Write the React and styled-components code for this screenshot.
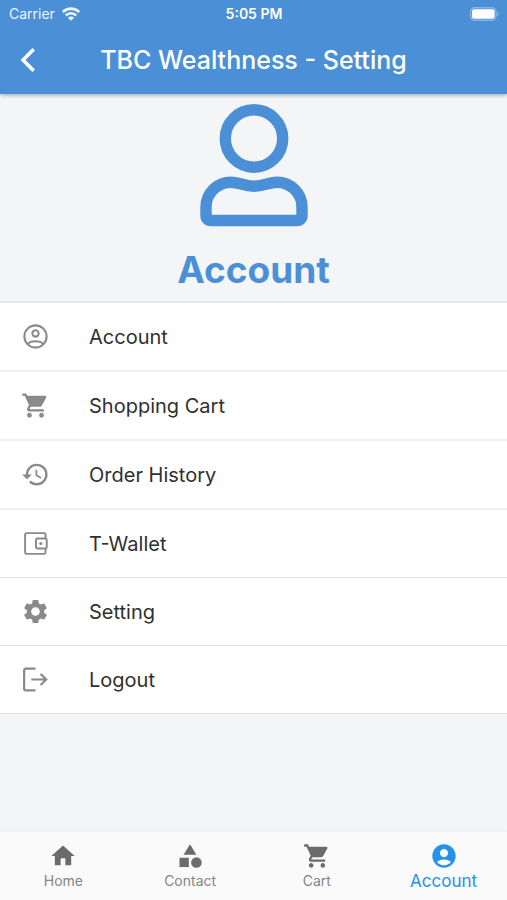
import React, { useState } from "react";
import styled, { createGlobalStyle } from "styled-components";
import {
  MdAccountCircle,
  MdCategory,
  MdHistory,
  MdHome,
  MdSettings,
  MdShoppingCart,
} from "react-icons/md";

const GlobalStyle = createGlobalStyle`
  * {
    box-sizing: border-box;
  }
  body {
    margin: 0;
    background-color: #f3f5f7;
    font-family: Inter, "Liberation Sans", sans-serif;
  }
`;

const Screen = styled.div`
  display: flex;
  flex-direction: column;
  min-height: 100vh;
`;

const Header = styled.header`
  position: relative;
  background-color: #4b90d7;
  color: white;
  box-shadow: 0 1px 4px rgba(0, 0, 0, 0.35);
`;

const StatusBar = styled.div`
  display: grid;
  grid-template-columns: 1fr auto 1fr;
  align-items: center;
  height: 27px;
  padding: 0 8px 0 9px;
  font-size: 14px;
`;

const Carrier = styled.span`
  display: flex;
  align-items: center;
  gap: 7px;
  opacity: 0.92;
`;

const Clock = styled.span`
  font-weight: 600;
`;

const Battery = styled.span`
  display: flex;
  justify-content: flex-end;
`;

const TitleBar = styled.div`
  display: grid;
  grid-template-columns: 56px 1fr 56px;
  align-items: center;
  height: 67px;
  padding-bottom: 2px;
`;

const BackButton = styled.button`
  display: flex;
  align-items: center;
  justify-content: center;
  height: 48px;
  padding: 0;
  border: none;
  background: none;
  color: white;
  cursor: pointer;
`;

const Title = styled.h1`
  margin: 0;
  font-size: 25px;
  font-weight: 500;
  text-align: center;
  white-space: nowrap;
`;

const Profile = styled.section`
  display: flex;
  flex-direction: column;
  align-items: center;
  gap: 19px;
  padding: 8px 0;
  border-bottom: 2px solid #e4e6e8;
  color: #4b90d7;
`;

const ProfileName = styled.h2`
  margin: 0;
  font-size: 37px;
  line-height: 46px;
  font-weight: 700;
`;

const Menu = styled.ul`
  margin: 0;
  padding: 0;
  list-style: none;
  background-color: white;
`;

const MenuItem = styled.li`
  border-bottom: ${(props) => (props.$thin ? "1px solid #dfe1e3" : "2px solid #eceeef")};
`;

const MenuButton = styled.button`
  display: flex;
  align-items: center;
  gap: 39px;
  width: 100%;
  height: 67px;
  padding: 0 21px;
  border: none;
  background: none;
  color: #303030;
  font-family: inherit;
  font-size: 20px;
  text-align: left;
  cursor: pointer;

  svg {
    flex: none;
    color: #8a8a8a;
  }
`;

const TabBar = styled.nav`
  display: flex;
  height: 68px;
  margin-top: auto;
  background-color: #fafafa;
  box-shadow: 0 -1px 4px rgba(0, 0, 0, 0.04);
`;

const Tab = styled.a`
  display: flex;
  flex: 1;
  flex-direction: column;
  align-items: center;
  padding-top: 10px;
  color: ${(props) => (props.$active ? "#2492ea" : "#858585")};
  font-size: ${(props) => (props.$active ? "17px" : "14px")};
  line-height: 22px;
  text-decoration: none;

  svg {
    color: ${(props) => (props.$active ? "#2492ea" : "#6b6b6b")};
  }
`;

function WifiIcon() {
  return (
    <svg width="18" height="14" viewBox="0 0 18 14" fill="none" stroke="currentColor" strokeWidth="2.7">
      <path d="M.8 5C5.4 .6 12.6 .6 17.2 5" />
      <path d="M3.8 8.4c3-2.9 7.4-2.9 10.4 0" />
      <path d="M9 13.8 5.9 10.7c1.8-1.7 4.4-1.7 6.2 0z" fill="currentColor" stroke="none" />
    </svg>
  );
}

function BatteryIcon() {
  return (
    <svg width="30" height="14" viewBox="0 0 30 14">
      <rect x="1.6" y="0.75" width="25.4" height="12.5" rx="4" fill="none" stroke="white" strokeOpacity="0.35" strokeWidth="1.3" />
      <rect x="3" y="2.3" width="22.6" height="9.4" rx="2" fill="white" />
      <path d="M28.2 5c1.6.6 1.6 3.4 0 4z" fill="white" fillOpacity="0.45" />
    </svg>
  );
}

function BackIcon() {
  return (
    <svg width="16" height="26" viewBox="0 0 16 26" fill="none" stroke="currentColor" strokeWidth="3.6">
      <path d="M13.7 2.2 3 13l10.7 10.8" />
    </svg>
  );
}

function PersonIcon() {
  return (
    <svg width="108" height="126" viewBox="0 0 108 126" fill="none" stroke="currentColor" strokeWidth="11.4">
      <circle cx="54" cy="36.5" r="28.7" />
      <path
        d="M6 108.5V105C6 91.5 17 80.2 31 80.2C39 80.2 44 84.3 54 84.3C64 84.3 69 80.2 77 80.2C91 80.2 102 91.5 102 105V113.5C102 116.5 100 118.5 97 118.5H11C8 118.5 6 116.5 6 113.5Z"
        strokeLinejoin="round"
      />
    </svg>
  );
}

function AccountOutlineIcon({ size }) {
  return (
    <svg width={size} height={size} viewBox="0 0 24 24" fill="none" stroke="currentColor" strokeWidth="1.7">
      <circle cx="12" cy="12" r="9.2" />
      <circle cx="12" cy="9.5" r="2.6" />
      <path d="M5.6 18.2C8.3 15.2 15.7 15.2 18.4 18.2" />
    </svg>
  );
}

function WalletIcon({ size }) {
  return (
    <svg width={size} height={size} viewBox="0 0 24 24" fill="none" stroke="currentColor" strokeWidth="1.6">
      <path d="M20.3 7.9V4.6Q20.3 3.4 19.1 3.4H4.6Q3.4 3.4 3.4 4.6V19.4Q3.4 20.6 4.6 20.6H19.1Q20.3 20.6 20.3 19.4V16.1" />
      <rect x="12.4" y="7.9" width="8.9" height="8.2" rx="1.2" />
      <circle cx="16.4" cy="12" r="1.3" fill="currentColor" stroke="none" />
    </svg>
  );
}

function LogoutIcon({ size }) {
  return (
    <svg width={size} height={size} viewBox="0 0 24 24" fill="none" stroke="currentColor" strokeWidth="1.8">
      <path d="M12 3H4Q2.6 3 2.6 4.4v15.2Q2.6 21 4 21H12" />
      <path d="M8.5 12H21M16.2 7.4l4.7 4.6-4.7 4.6" />
    </svg>
  );
}

const menuItems = [
  { label: "Account", Icon: AccountOutlineIcon },
  { label: "Shopping Cart", Icon: MdShoppingCart },
  { label: "Order History", Icon: MdHistory },
  { label: "T-Wallet", Icon: WalletIcon, thin: true },
  { label: "Setting", Icon: MdSettings, thin: true },
  { label: "Logout", Icon: LogoutIcon, thin: true },
];

const tabs = [
  { label: "Home", Icon: MdHome },
  { label: "Contact", Icon: MdCategory },
  { label: "Cart", Icon: MdShoppingCart },
  { label: "Account", Icon: MdAccountCircle },
];

export default function App() {
  const [activeTab, setActiveTab] = useState("Account");

  return (
    <Screen>
      <GlobalStyle />
      <Header>
        <StatusBar>
          <Carrier>
            Carrier
            <WifiIcon />
          </Carrier>
          <Clock>5:05 PM</Clock>
          <Battery>
            <BatteryIcon />
          </Battery>
        </StatusBar>
        <TitleBar>
          <BackButton type="button" aria-label="Back">
            <BackIcon />
          </BackButton>
          <Title>TBC Wealthness - Setting</Title>
        </TitleBar>
      </Header>
      <Profile>
        <PersonIcon />
        <ProfileName>Account</ProfileName>
      </Profile>
      <Menu>
        {menuItems.map(({ label, Icon, thin }) => (
          <MenuItem key={label} $thin={thin}>
            <MenuButton type="button">
              <Icon size={29} />
              {label}
            </MenuButton>
          </MenuItem>
        ))}
      </Menu>
      <TabBar>
        {tabs.map(({ label, Icon }) => (
          <Tab
            key={label}
            href={`#${label.toLowerCase()}`}
            $active={label === activeTab}
            onClick={() => setActiveTab(label)}
          >
            <Icon size={28} />
            {label}
          </Tab>
        ))}
      </TabBar>
    </Screen>
  );
}
